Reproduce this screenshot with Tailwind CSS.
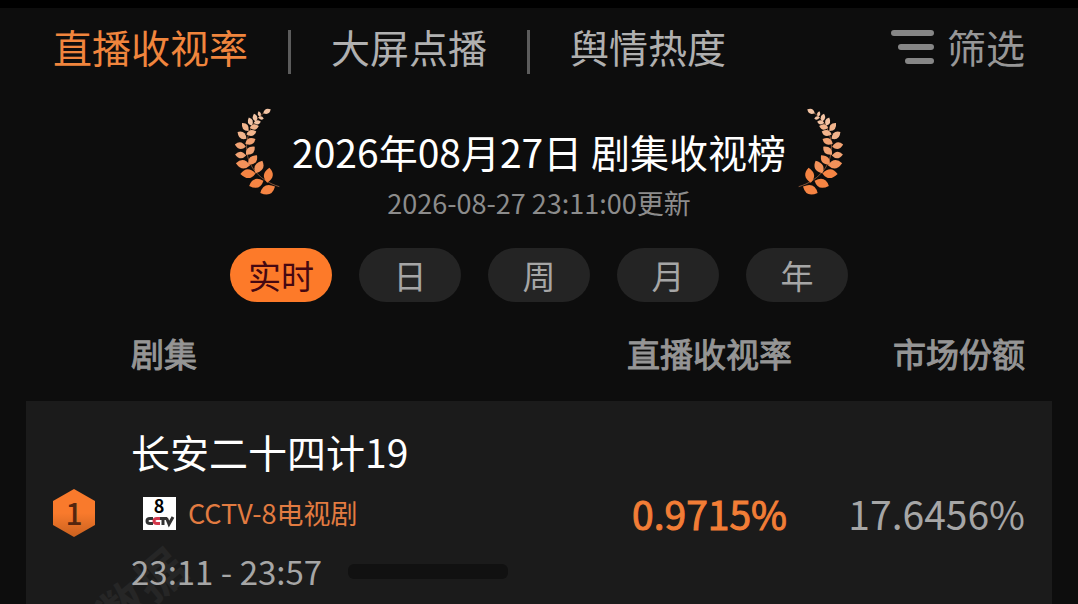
<!DOCTYPE html>
<html lang="zh-CN">

<head>
  <meta charset="UTF-8">
  <meta name="viewport" content="width=device-width, initial-scale=1.0">
  <title>剧集收视榜</title>
  <script src="https://cdn.jsdelivr.net/npm/@tailwindcss/browser@4"></script>
</head>

<body class="h-screen overflow-hidden flex flex-col bg-[#0d0d0d] border-t-8 border-black font-['Noto_Sans_CJK_SC',sans-serif] text-[#a6a6a6]">
  <header class="flex items-center justify-between pl-[53px] pr-[53px] pt-[10px] text-[39px] leading-[56px]">
    <nav class="flex items-end text-[#b0b0b0]">
      <a href="#live" class="text-[#f0853d]">直播收视率</a>
      <span class="mx-10 h-11 w-[3px] bg-[#5c5c5c]"></span>
      <a href="#vod">大屏点播</a>
      <span class="mx-10 h-11 w-[3px] bg-[#5c5c5c]"></span>
      <a href="#buzz">舆情热度</a>
    </nav>
    <button type="button" class="flex items-center gap-3 text-[#979797]">
      <svg class="w-11 h-9" viewBox="0 0 44 36" fill="none" stroke="#868686" stroke-width="6" stroke-linecap="round">
        <path d="M3 5H40M10 19H40M17 33H40" />
      </svg>
      <span>筛选</span>
    </button>
  </header>

  <main class="flex-1 flex flex-col">
    <!-- Title with laurel branches -->
    <section class="flex items-start justify-center gap-3 pt-[34px]">
      <svg class="w-[45px] h-[87px] overflow-visible" viewBox="45 40 135 261">
        <defs>
          <path id="leaf" d="M-12 0Q-1 -14 12 0Q1 14 -12 0Z" />
          <g id="branch">
            <path d="M178 276C150 268 118 250 98 220C76 186 74 145 90 108C98 88 112 68 136 52" fill="none" stroke="#b9734a" stroke-width="2" />
            <g fill="#f3c3a3">
              <use href="#leaf" transform="translate(141 50) rotate(-28) scale(1.05)" />
              <use href="#leaf" transform="translate(118 58) rotate(75) scale(.7)" />
              <use href="#leaf" transform="translate(123 70) rotate(10) scale(.7)" />
              <use href="#leaf" transform="translate(105 69) rotate(75)" />
              <use href="#leaf" transform="translate(112 83) rotate(-10) scale(.9)" />
              <use href="#leaf" transform="translate(91 81) rotate(70) scale(1.1)" />
            </g>
            <g fill="#f2b48c">
              <use href="#leaf" transform="translate(103 97) rotate(-12) scale(1.15)" />
              <use href="#leaf" transform="translate(76 97) rotate(50) scale(1.3)" />
              <use href="#leaf" transform="translate(94 115) rotate(-18) scale(1.3)" />
              <use href="#leaf" transform="translate(66 122) rotate(38) scale(1.4)" />
            </g>
            <g fill="#f1a273">
              <use href="#leaf" transform="translate(91 140) rotate(-25) scale(1.4)" />
              <use href="#leaf" transform="translate(61 153) rotate(12) scale(1.4)" />
              <use href="#leaf" transform="translate(91 168) rotate(-42) scale(1.5)" />
              <use href="#leaf" transform="translate(62 181) rotate(6) scale(1.4)" />
            </g>
            <g fill="#f3925a">
              <use href="#leaf" transform="translate(98 196) rotate(-48) scale(1.6)" />
              <use href="#leaf" transform="translate(69 209) rotate(8) scale(1.8)" />
              <use href="#leaf" transform="translate(117 217) rotate(-62) scale(1.8)" />
            </g>
            <g fill="#f58443">
              <use href="#leaf" transform="translate(84 237) rotate(-2) scale(1.9)" />
              <use href="#leaf" transform="translate(145 242) rotate(-82) scale(1.9)" />
              <use href="#leaf" transform="translate(109 266) rotate(-20) scale(1.9)" />
              <use href="#leaf" transform="translate(143 285) rotate(-24) scale(2)" />
            </g>
          </g>
        </defs>
        <use href="#branch" />
      </svg>
      <div class="pt-[14px] text-center">
        <h1 class="text-[39px] leading-[58px] text-white whitespace-nowrap">2026年08月27日 剧集收视榜</h1>
        <p class="mt-[3px] text-[27px] leading-10 text-[#8c8c8c]">2026-08-27 23:11:00更新</p>
      </div>
      <svg class="w-[45px] h-[87px] overflow-visible -scale-x-100" viewBox="45 40 135 261">
        <use href="#branch" />
      </svg>
    </section>

    <!-- Period filter -->
    <div class="flex justify-center gap-[27px] pt-[25px] text-[33px] leading-[54px]">
      <button type="button" class="w-[102px] h-[54px] rounded-full bg-[#fd7a29] text-[#450812]">实时</button>
      <button type="button" class="w-[102px] h-[54px] rounded-full bg-[#242424]">日</button>
      <button type="button" class="w-[102px] h-[54px] rounded-full bg-[#242424]">周</button>
      <button type="button" class="w-[102px] h-[54px] rounded-full bg-[#242424]">月</button>
      <button type="button" class="w-[102px] h-[54px] rounded-full bg-[#242424]">年</button>
    </div>

    <div class="relative flex-1 px-[26px]">
      <table class="w-full">
        <thead class="text-[33px] leading-[95px] text-[#959595] [-webkit-text-stroke:1px]">
          <tr>
            <th class="w-[105px] pt-1"></th>
            <th class="pt-1 text-left font-normal">剧集</th>
            <th class="w-[165px] pt-1 font-normal">直播收视率</th>
            <th class="w-[260px] pt-1 pr-[27px] text-right font-normal">市场份额</th>
          </tr>
        </thead>
        <tbody class="bg-[#1b1b1b]">
          <tr class="h-[224px]">
            <td class="pl-[26px]">
              <svg class="w-11 h-12" viewBox="0 0 44 48">
                <defs>
                  <linearGradient id="medal" x1="0" y1="0" x2="0" y2="1">
                    <stop offset="0.5" stop-color="#f97a2c" />
                    <stop offset="1" stop-color="#c9611f" />
                  </linearGradient>
                </defs>
                <path d="M22 0L43 12V36L22 48L1 36V12Z" fill="url(#medal)" />
                <text x="22" y="36" text-anchor="middle" font-size="30" font-weight="500" fill="#54260f">1</text>
              </svg>
            </td>
            <td>
              <div class="relative z-10">
                <h2 class="text-[39px] leading-[52px] text-white">长安二十四计19</h2>
                <div class="flex items-center gap-3 pl-3 pt-2 text-[27px] leading-[56px] text-[#e27b41]">
                  <svg class="w-[33px] h-[33px] bg-white" viewBox="0 0 33 33">
                    <text x="16" y="16" text-anchor="middle" font-size="18" font-weight="700">8</text>
                    <g fill="none" stroke="#333" stroke-width="3">
                      <path d="M10 21.500H7Q4 21.500 4 24T7 26.500H10" />
                      <path d="M17 21.500H14Q11 21.500 11 24T14 26.500H17" stroke="#d3374a" />
                      <path d="M17 21.500H24M20 21V28M23.500 21L26 27L30 20" />
                    </g>
                  </svg>
                  <span>CCTV-8电视剧</span>
                </div>
                <div class="flex items-center gap-[26px] text-[33px] leading-[60px]">
                  <span>23:11 - 23:57</span>
                  <span class="w-40 h-[15px] rounded-md bg-[#111]"></span>
                </div>
              </div>
            </td>
            <td class="text-center text-[39px] text-[#f27d36] [-webkit-text-stroke:1px]">0.9715%</td>
            <td class="pr-[27px] text-right text-[39px]">17.6456%</td>
          </tr>
        </tbody>
      </table>
      <span class="absolute left-[92px] top-[262px] text-[48px] leading-none -rotate-40 font-bold text-[#262626]" aria-hidden="true">数据</span>
    </div>
  </main>
</body>

</html>
